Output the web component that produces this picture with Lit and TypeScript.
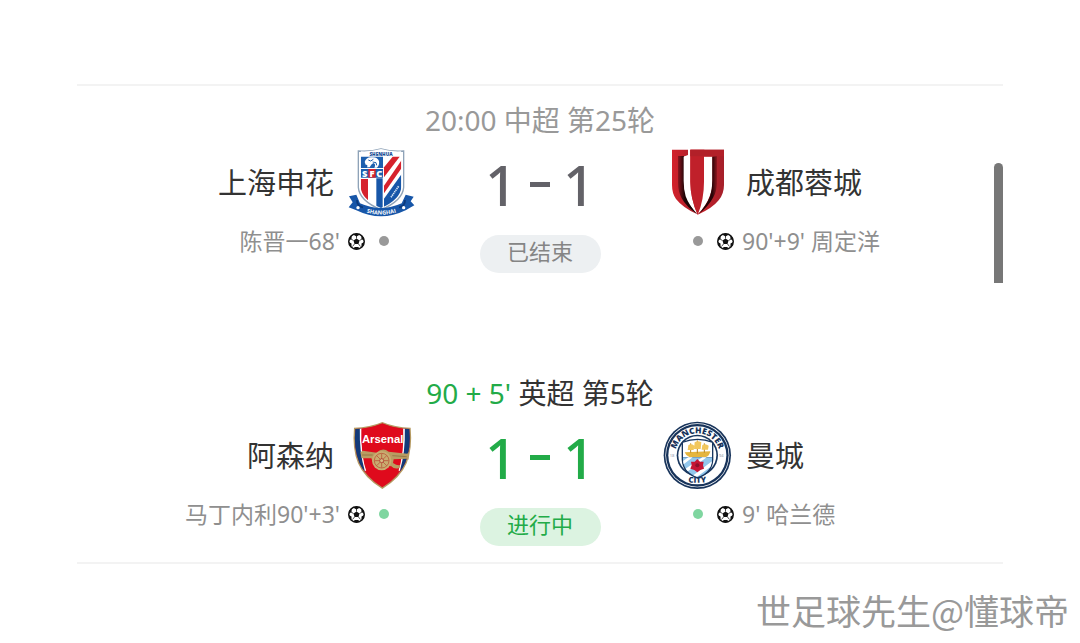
import { LitElement, html, css, svg, nothing } from "lit";
import { customElement, property } from "lit/decorators.js";
import { classMap } from "lit/directives/class-map.js";

type Team = { name: string; crest: string; scorer: string };
type Match = {
  clock: string;
  round: string;
  status: string;
  live: boolean;
  home: Team;
  away: Team;
  score: [number, number];
};

const matches: Match[] = [
  {
    clock: "20:00",
    round: "中超 第25轮",
    status: "已结束",
    live: false,
    home: { name: "上海申花", crest: "shenhua", scorer: "陈晋一68'" },
    away: { name: "成都蓉城", crest: "rongcheng", scorer: "90'+9' 周定洋" },
    score: [1, 1],
  },
  {
    clock: "90 + 5'",
    round: "英超 第5轮",
    status: "进行中",
    live: true,
    home: { name: "阿森纳", crest: "arsenal", scorer: "马丁内利90'+3'" },
    away: { name: "曼城", crest: "city", scorer: "9' 哈兰德" },
    score: [1, 1],
  },
];

const shenhua = svg`
  <defs>
    <clipPath id="shield"><path d="M61 34Q90 36 122 27Q152 36 183 34V140Q181 178 122 204Q63 178 61 140Z"/></clipPath>
  </defs>
  <path d="M54 33Q90 36 122 27Q154 36 190 33V142Q187 182 122 209Q57 182 54 142Z" fill="#fff" stroke="#8fa3b8" stroke-width="4"/>
  <g clip-path="url(#shield)">
    <rect x="57" y="24" width="130" height="185" fill="#fff"/>
    <path d="M61 50H128V84H61Z" fill="#1d5fae"/>
    <path d="M61 87H128V113H61Z" fill="#1d5fae"/>
    <path d="M61 117H83V180H61Z" fill="#d6222d"/>
    <path d="M108 115H127V206H108Z" fill="#1756a8"/>
    <path d="M131 82L157 50H178L131 112Z" fill="#d6222d"/>
    <path d="M131 137L184 60V84L131 160Z" fill="#d6222d"/>
    <path d="M131 176L184 102V205H131Z" fill="#1756a8"/>
    <path d="M152 172L176 137" stroke="#dce8f5" stroke-width="5" stroke-dasharray="4 2"/>
  </g>
  <path d="M73 66Q77 52 92 52Q111 49 116 63Q118 75 110 83H102Q108 72 99 69Q92 73 88 82H80Q84 73 76 74Z" fill="#fff"/>
  <path d="M84 60L91 63L99 58M97 66L107 68L109 76" fill="none" stroke="#1d5fae" stroke-width="3"/>
  <path d="M84 87H106V113H84Z" fill="#d6222d"/>
  <g font-size="28" font-weight="800" fill="#fff" text-anchor="middle">
    <text x="73" y="110">S</text><text x="95" y="110">F</text><text x="117" y="110">C</text>
  </g>
  <text x="122" y="47" text-anchor="middle" font-size="14" font-weight="800" fill="#174f95">SHENHUA</text>
  <path d="M26 169L48 164L59 190Q122 218 184 190L196 164L220 170L211 184L222 196L196 211Q122 247 48 211L25 202L37 187Z" fill="#1756a8"/>
  <path d="M50 180Q49 198 68 202M194 180Q195 198 176 202" fill="none" stroke="#0b397b" stroke-width="5"/>
  <path id="ribbon" d="M68 214Q122 234 178 214" fill="none"/>
  <text font-size="17" font-weight="700" fill="#fff"><textPath href="#ribbon" startOffset="50%" text-anchor="middle">SHANGHAI</textPath></text>
  <circle cx="53" cy="203" r="5" fill="#fff"/><circle cx="190" cy="203" r="5" fill="#fff"/>`;

const rongcheng = svg`
  <defs>
    <linearGradient id="red" x1="0" x2="1"><stop offset="0" stop-color="#d3212b"/><stop offset="1" stop-color="#a5202a"/></linearGradient>
    <linearGradient id="darkLeft" x1="0" x2="1"><stop offset="0" stop-color="#8a1620"/><stop offset="0.35" stop-color="#1c0405"/><stop offset="1" stop-color="#120203"/></linearGradient>
    <linearGradient id="darkRight" x1="0" x2="1"><stop offset="0" stop-color="#120203"/><stop offset="0.75" stop-color="#2a0508"/><stop offset="1" stop-color="#8e1720"/></linearGradient>
  </defs>
  <path d="M36 29H84V45L70 50V125Q72 185 112 223Q68 203 48 177Q36 160 36 135Z" fill="url(#red)"/>
  <path d="M54 48H72V122Q72 178 112 222Q79 201 65 175Q54 153 54 128Z" fill="url(#darkLeft)"/>
  <path d="M71 50H92V125Q93 180 113 222Q87 197 77 169Q71 149 71 122Z" fill="#fff"/>
  <path d="M91 29H192V135Q192 162 176 181Q156 206 113 224Q91 175 91 125Z" fill="url(#red)"/>
  <path d="M91 29H133V125Q133 175 113 224Q91 175 91 125Z" fill="#c0202a"/>
  <path d="M132 50H157V122Q157 149 149 169Q139 197 114 222Q132 178 132 125Z" fill="#fff"/>
  <path d="M157 50L171 48V130Q170 155 160 172Q145 200 115 223Q140 195 150 169Q157 149 157 122Z" fill="url(#darkRight)"/>
  <path d="M91 29H192V49H91Z" fill="#b22029"/>`;

const arsenal = svg`
  <path d="M126 27Q162 43 211 44Q217 107 199 151Q180 196 126 228Q72 196 53 151Q35 107 41 44Q90 43 126 27Z" fill="#b59a61"/>
  <path d="M126 31Q163 47 207 48Q213 106 195 149Q176 192 126 223Q76 192 57 149Q39 106 45 48Q89 47 126 31Z" fill="#d6182a"/>
  <path d="M190 47L207 48Q213 106 195 149Q188 165 178 176Q193 122 190 47Z" fill="#123a79"/>
  <path d="M62 47L45 48Q39 106 57 149Q64 165 74 176Q59 122 62 47Z" fill="#123a79"/>
  <path d="M61 47Q59 117 76 173M191 47Q193 117 176 173" fill="none" stroke="#fff" stroke-width="5"/>
  <path d="M126 32Q157 44 188 47Q192 124 172 181Q154 204 126 221Q98 204 80 181Q60 124 64 47Q95 44 126 32Z" fill="#df0a1c"/>
  <text x="127" y="91" text-anchor="middle" font-size="34" font-weight="700" fill="#fff" class="wide">Arsenal</text>
  <path d="M60 118L67 113L109 119Q127 101 145 116L201 122L205 116V140L199 137L160 139L158 150Q173 160 180 155L177 165Q162 170 153 160L100 154L93 136H64Z" fill="#b99c62"/>
  <circle cx="124" cy="143" r="29" fill="#c9ac70"/>
  <circle cx="124" cy="143" r="22" fill="none" stroke="#b5452f" stroke-width="2"/>
  <path d="M124 122V164M103 143H145M109 128L139 158M139 128L109 158" stroke="#b5452f" stroke-width="2"/>
  <circle cx="124" cy="143" r="6" fill="#d7bd84" stroke="#a92626" stroke-width="2"/>
  <path d="M65 126H97M156 128L199 131" stroke="#85683b" stroke-width="2"/>`;

const city = svg`
  <defs><clipPath id="cityShield"><path d="M82 89Q126 73 169 89V140Q167 178 126 192Q84 178 82 140Z"/></clipPath></defs>
  <circle cx="125" cy="127" r="101" fill="#17335a"/>
  <circle cx="125" cy="127" r="96" fill="#fff"/>
  <circle cx="125" cy="127" r="94" fill="#17335a"/>
  <circle cx="125" cy="127" r="87" fill="#fff"/>
  <circle cx="125" cy="127" r="62" fill="#18365e"/>
  <circle cx="125" cy="127" r="57" fill="#fff"/>
  <path d="M78 87Q126 68 173 87V140Q171 181 126 197Q80 181 78 140Z" fill="#18365e"/>
  <g clip-path="url(#cityShield)">
    <path d="M80 76H171V132H80Z" fill="#fff"/>
    <path d="M80 133H171V198H80Z" fill="#93c7ec"/>
    <path d="M80 145L98 133H111L80 157ZM80 174L140 133H153L89 181ZM107 191L171 143V157L118 196Z" fill="#fff"/>
  </g>
  <path d="M87 118L164 115Q161 130 151 132H101Q91 129 87 118Z" fill="#e5b53f"/>
  <path d="M125 82V121M105 91V119M146 91V119" stroke="#b98422" stroke-width="3"/>
  <path d="M98 97Q106 90 116 98L114 111H96ZM117 88Q127 81 137 88L135 108H115ZM140 96Q150 90 159 98L157 110H138Z" fill="#f2c75c"/>
  <path d="M125 138L133 146L144 146L142 157L145 167L134 171L125 178L116 171L104 167L108 157L106 146L117 146Z" fill="#c51635"/>
  <circle cx="125" cy="157" r="6" fill="#8c102a"/>
  <path id="arcTop" d="M60 144A67 67 0 1 1 190 144" fill="none"/>
  <path id="arcBottom" d="M70 204Q125 215 180 204" fill="none"/>
  <g font-weight="800" fill="#17335a">
    <text font-size="25"><textPath href="#arcTop" startOffset="50%" text-anchor="middle">MANCHESTER</textPath></text>
    <text font-size="24"><textPath href="#arcBottom" startOffset="50%" text-anchor="middle">CITY</textPath></text>
  </g>
  <g font-size="12" fill="#7c8a9e"><text x="42" y="132">18</text><text x="190" y="132">94</text></g>`;

const crests: Record<string, { box: string; art: unknown }> = {
  shenhua: { box: "26 27 198 204", art: shenhua },
  rongcheng: { box: "15 27 198 204", art: rongcheng },
  arsenal: { box: "26 27 198 204", art: arsenal },
  city: { box: "28 27 198 204", art: city },
};

@customElement("team-crest")
export class TeamCrest extends LitElement {
  @property() kind = "";
  @property() label = "";

  static styles = css`
    :host { display: block; flex: none; width: 66px; height: 68px; }
    .art { display: block; width: 100%; height: 100%; overflow: visible; font-family: "Open Sans", "Noto Sans", sans-serif; }
    .wide { font-family: "Liberation Sans", sans-serif; }
  `;

  render() {
    const crest = crests[this.kind];
    return crest
      ? html`<svg class="art" viewBox=${crest.box} role="img" aria-label=${this.label}>${crest.art}</svg>`
      : nothing;
  }
}

@customElement("match-card")
export class MatchCard extends LitElement {
  @property({ attribute: false }) match!: Match;

  static styles = css`
    :host { display: block; }
    .match { display: flex; flex-direction: column; gap: 11px; color: #333; }
    .title { margin: 0; text-align: center; font-size: 28px; line-height: 36px; font-weight: 400; color: #999; }
    .body { display: grid; grid-template-columns: 1fr 250px 1fr; }
    .side { display: flex; flex-direction: column; gap: 8px; }
    .team, .event { display: flex; align-items: center; }
    .team { gap: 15px; font-size: 29px; line-height: 36px; }
    .event { gap: 8px; font-size: 23px; line-height: 32px; color: #8f8f8f; }
    .home .team, .home .event { justify-content: flex-end; }
    .away .team, .away .event { flex-direction: row-reverse; justify-content: flex-end; }
    .home .event { padding-right: 20px; }
    .away .event { padding-left: 22px; }
    .ball { display: block; flex: none; width: 17px; height: 17px; }
    .dot { flex: none; width: 10px; height: 10px; margin: 0 6px; border-radius: 50%; background: #999; }
    .middle { display: flex; flex-direction: column; align-items: center; gap: 16px; }
    .score { display: flex; align-items: center; justify-content: center; gap: 13px; height: 70px; font-size: 56px; line-height: 70px; font-weight: 500; color: #636268; }
    .dash { width: 20px; height: 5px; background: currentColor; }
    .status { min-width: 121px; box-sizing: border-box; padding-bottom: 6px; border-radius: 19px; text-align: center; font-size: 22px; line-height: 32px; color: #858585; background: #edf0f2; }
    .live .title { color: #333; }
    .live .clock, .live .score { color: #22ab48; }
    .live .status { color: #22ab48; background: #dcf3e1; }
    .live .dot { background: #7fd6a0; }
  `;

  private side(team: Team, place: "home" | "away") {
    return html`<div class="side ${place}">
      <div class="team">
        <span>${team.name}</span>
        <team-crest kind=${team.crest} label=${team.name}></team-crest>
      </div>
      <div class="event">
        <span>${team.scorer}</span>
        <svg class="ball" viewBox="0 0 34 34" aria-hidden="true">
          <circle cx="17" cy="17" r="15.5" fill="#fff" stroke="#111" stroke-width="3" />
          <path d="M17 11L23 15L21 22H13L11 15ZM10 3L17 7L24 3L17 1ZM1.500 16L7 12L7.500 5L2 10ZM32.500 16L27 12L26.500 5L32 10ZM7 28L7 21L1.500 18L3 25ZM27 28L27 21L32.500 18L31 25ZM10 32L13.500 28H20.500L24 32L17 33Z" fill="#111" />
          <path d="M17 11V6M23 15L28 12M21 22L25 27M13 22L9 27M11 15L6 12" stroke="#111" stroke-width="1.500" />
        </svg>
        <i class="dot"></i>
      </div>
    </div>`;
  }

  render() {
    const m = this.match;
    return html`<article class=${classMap({ match: true, live: m.live })}>
      <h2 class="title"><span class="clock">${m.clock}</span> ${m.round}</h2>
      <div class="body">
        ${this.side(m.home, "home")}
        <div class="middle">
          <div class="score"><span>${m.score[0]}</span><i class="dash"></i><span>${m.score[1]}</span></div>
          <div class="status">${m.status}</div>
        </div>
        ${this.side(m.away, "away")}
      </div>
    </article>`;
  }
}

@customElement("app-root")
export class AppRoot extends LitElement {
  static styles = css`
    :host { display: block; min-height: 100vh; background: #fff; font-family: "Noto Sans", "Noto Sans CJK SC", sans-serif; }
    .page { padding: 84px 77px 0; }
    .list { position: relative; display: flex; flex-direction: column; gap: 102px; padding: 16px 0; border: solid #f3f3f3; border-width: 2px 0; }
    .thumb { position: absolute; top: 77px; right: 0; width: 9px; height: 120px; border-radius: 5px 5px 0 0; background: #777; }
    .credit { margin: 0; padding: 21px 11px 0; text-align: right; font-size: 35px; line-height: 50px; font-weight: 400; color: #999; font-family: "Noto Sans CJK SC", sans-serif; }
  `;

  render() {
    return html`<main class="page">
        <section class="list">
          ${matches.map((m) => html`<match-card .match=${m}></match-card>`)}
          <div class="thumb"></div>
        </section>
      </main>
      <p class="credit">世足球先生@懂球帝</p>`;
  }
}
